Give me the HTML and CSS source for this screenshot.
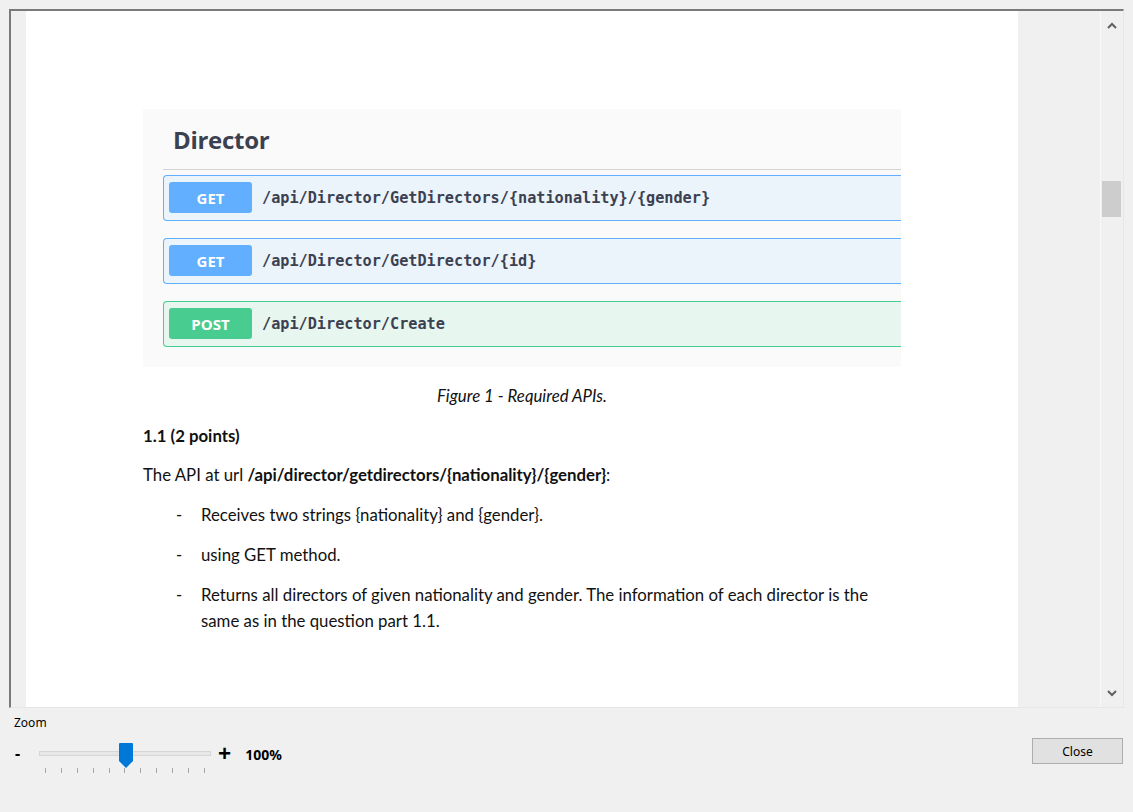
FILE: index.html
```html
<!DOCTYPE html>
<html>
<head>
<meta charset="utf-8">
<link rel="stylesheet" href="styles.css">
</head>
<body>
<div class="app">
  <div class="viewer">
    <div class="gutter"></div>
    <div class="page">
      <div class="swagger">
        <h2 class="tag">Director</h2>
        <div class="op op-get"><span class="method m-get">GET</span><span class="path">/api/Director/GetDirectors/{nationality}/{gender}</span></div>
        <div class="op op-get"><span class="method m-get">GET</span><span class="path">/api/Director/GetDirector/{id}</span></div>
        <div class="op op-post"><span class="method m-post">POST</span><span class="path">/api/Director/Create</span></div>
      </div>
      <p class="caption">Figure 1 - Required APIs.</p>
      <p class="heading">1.1 (2 points)</p>
      <p class="para">The API at url <b>/api/director/getdirectors/{nationality}/{gender}</b>:</p>
      <ul class="dash">
        <li><span class="mark">-</span><span class="item">Receives two strings {nationality} and {gender}.</span></li>
        <li><span class="mark">-</span><span class="item">using GET method.</span></li>
        <li><span class="mark">-</span><span class="item">Returns all directors of given nationality and gender. The information of each director is the same as in the question part 1.1.</span></li>
      </ul>
    </div>
    <div class="gutter-r"></div>
    <div class="vscroll">
      <div class="arrow"><svg width="10" height="7" viewBox="0 0 10 7"><path d="M1 6 L5 2 L9 6" fill="none" stroke="#606060" stroke-width="2"/></svg></div>
      <div class="sthumb"></div>
      <div class="sfill"></div>
      <div class="arrow"><svg width="10" height="7" viewBox="0 0 10 7"><path d="M1 1 L5 5 L9 1" fill="none" stroke="#606060" stroke-width="2"/></svg></div>
    </div>
  </div>
  <div class="controls">
    <div class="zoom">
      <div class="zlabel">Zoom</div>
      <div class="zrow">
        <span class="minus">-</span>
        <div class="slider">
          <div class="track"></div>
          <div class="ticks">
            <i></i><i></i><i></i><i></i><i></i><i></i><i></i><i></i><i></i><i></i><i></i>
          </div>
          <svg class="knob" width="14" height="25" viewBox="0 0 14 25"><path d="M1 0 H13 Q14 0 14 1 V18 L7 25 L0 18 V1 Q0 0 1 0 Z" fill="#0078d7"/></svg>
        </div>
        <span class="plus">+</span>
        <span class="pct">100%</span>
      </div>
    </div>
    <button class="close">Close</button>
  </div>
</div>
</body>
</html>
```
FILE: styles.css
```css
* { box-sizing: border-box; }
html, body { margin: 0; padding: 0; }
body {
  background: #f0f0f0;
  width: 1133px;
  height: 812px;
  overflow: hidden;
  font-family: "Noto Sans", "Open Sans", sans-serif;
}
.app { display: flex; flex-direction: column; height: 812px; }

.viewer {
  margin: 9px 9px 0 9px;
  height: 699px;
  border-top: 2px solid #7a7a7a;
  border-left: 2px solid #7a7a7a;
  border-right: 1px solid #e6e6e6;
  border-bottom: 1px solid #e6e6e6;
  display: grid;
  grid-template-columns: 15px 992px 82px 23px;
  background: #f0f0f0;
}
.gutter, .gutter-r { background: #f0f0f0; }

.page {
  background: #ffffff;
  padding: 98px 0 0 117px;
  font-family: "Lato", sans-serif;
  font-size: 16.8px;
  color: #111;
  overflow: hidden;
}

.swagger {
  width: 758px;
  height: 258px;
  background: #fafafa;
  padding: 0 0 20px 20px;
  font-family: "Open Sans", "Noto Sans", sans-serif;
  color: #3b4151;
}
.tag {
  margin: 0;
  height: 61px;
  padding: 16px 0 0 10px;
  font-size: 24px;
  line-height: 30px;
  font-weight: 700;
  letter-spacing: -0.3px;
  border-bottom: 1px solid #d3d3d3;
}
.op {
  display: flex;
  align-items: center;
  height: 46px;
  margin-top: 17px;
  padding: 0 0 1px 5px;
  border: 1px solid;
  border-right: none;
  border-radius: 4px 0 0 4px;
}
.tag + .op { margin-top: 5px; }
.op-get { background: #ebf3fb; border-color: #61affe; }
.op-post { background: #e8f6f0; border-color: #49cc90; }
.method {
  width: 83px;
  height: 31px;
  border-radius: 3px;
  color: #fff;
  font-weight: 700;
  font-size: 15px;
  display: flex;
  align-items: center;
  justify-content: center;
}
.m-get { background: #61affe; }
.m-post { background: #49cc90; }
.path {
  margin-left: 10px;
  font-family: "DejaVu Sans Mono", monospace;
  font-weight: 700;
  font-size: 15.2px;
  color: #3b4151;
}

.page p { margin: 0; line-height: 26px; }
.caption {
  width: 758px;
  text-align: center;
  font-style: italic;
  margin-top: 16px !important;
}
.heading { font-weight: 700; margin-top: 14px !important; }
.para { margin-top: 13px !important; }
.dash { list-style: none; margin: 0; padding: 0; }
.dash li {
  display: flex;
  margin-top: 14px;
  line-height: 26px;
}
.mark { width: 58px; padding-left: 33px; flex: none; }
.item { width: 690px; }

.vscroll {
  border-left: 1px solid #f8f8f8;
  display: flex;
  flex-direction: column;
  align-items: center;
}
.arrow {
  height: 22px;
  width: 100%;
  display: flex;
  align-items: center;
  justify-content: center;
}
.vscroll .arrow:first-child { padding-top: 6px; }
.vscroll .arrow:last-child { padding-bottom: 6px; }
.sthumb {
  width: 19px;
  height: 36px;
  margin-top: 148px;
  margin-right: 2px;
  background: #cdcdcd;
}
.sfill { flex: 1; }

.controls {
  flex: 1;
  display: flex;
  justify-content: space-between;
  align-items: flex-start;
  padding: 0 10px 0 14px;
  font-family: "Noto Sans", "Open Sans", sans-serif;
  font-size: 12px;
  color: #000;
}
.zlabel { margin-top: 7px; line-height: 16px; }
.zrow { display: flex; align-items: flex-start; margin-top: 12px; }
.minus { width: 25px; font-weight: 700; font-size: 16px; line-height: 20px; padding-left: 1px; }
.slider { position: relative; width: 172px; height: 32px; }
.track {
  margin-top: 8px;
  height: 5px;
  background: #e7e7e7;
  border: 1px solid #d6d6d6;
}
.ticks {
  display: flex;
  justify-content: space-between;
  padding: 0 6px;
  margin-top: 12px;
}
.ticks i { display: block; width: 1px; height: 5px; background: #a8a8a8; }
.knob { position: absolute; left: 80px; top: 0; }
.plus { margin-left: 7px; font-weight: 700; font-size: 23px; line-height: 20px; }
.pct { margin-left: 14px; font-weight: 700; font-size: 14px; line-height: 24px; }
.close {
  margin-top: 30px;
  width: 91px;
  height: 26px;
  background: #e1e1e1;
  border: 1px solid #adadad;
  font-family: "Noto Sans", "Open Sans", sans-serif;
  font-size: 12px;
  color: #000;
  padding: 0;
}
```
